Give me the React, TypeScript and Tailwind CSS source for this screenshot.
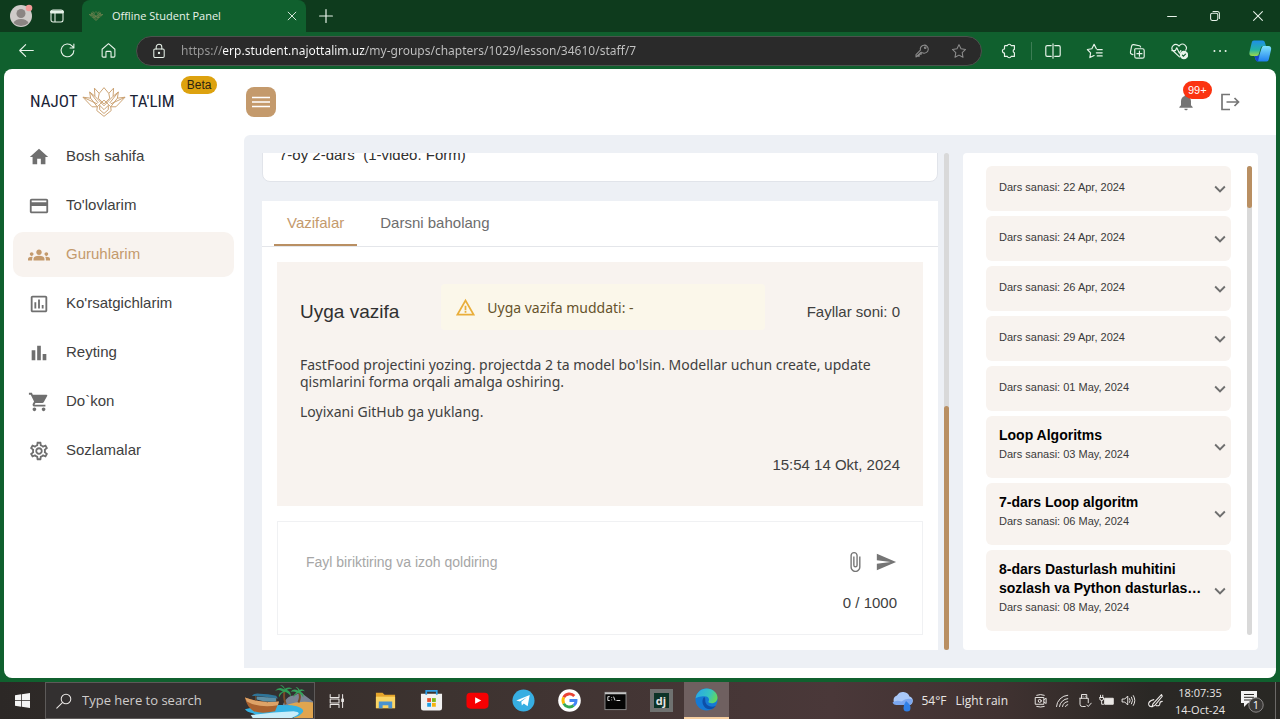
import type { ReactNode } from "react";
import { useState } from "react";
import {
  MdAttachFile,
  MdBarChart,
  MdCreditCard,
  MdExpandMore,
  MdGroups,
  MdHome,
  MdNotifications,
  MdOutlineAssessment,
  MdOutlineSettings,
  MdSend,
  MdShoppingCart,
  MdWarningAmber,
} from "react-icons/md";

type IconProps = { children: ReactNode; className?: string; viewBox?: string };

function Line({ children, className = "size-4", viewBox = "0 0 20 20" }: IconProps) {
  return (
    <svg
      aria-hidden="true"
      viewBox={viewBox}
      className={`shrink-0 ${className}`}
      fill="none"
      stroke="currentColor"
      strokeWidth="1.3"
      strokeLinecap="round"
      strokeLinejoin="round"
    >
      {children}
    </svg>
  );
}

function Lotus({ className }: { className: string }) {
  return (
    <svg
      aria-hidden="true"
      viewBox="0 0 46 32"
      className={`shrink-0 ${className}`}
      fill="none"
      stroke="#c9a06f"
      strokeWidth="1"
      strokeLinejoin="round"
    >
      <path d="M23 1 L18 7 L13 1.500 L13.500 10 L8 5.500 L9 12 L1 11 L10.500 21 H16 L15.500 25 L23 31 L30.500 25 L30 21 H35.500 L45 11 L37 12 L38 5.500 L32.500 10 L33 1.500 L28 7 Z" />
      <path d="M18 7 L17 12 L23 18 L29 12 L28 7 M13.500 10 L23 20 L32.500 10" />
      <path d="M9 12 L16 21 L23 14 L30 21 L37 12" />
      <path d="M1 11 L16 18 M45 11 L30 18 M8 5.500 L17 17 M38 5.500 L29 17" />
      <path d="M18.500 19.500 V24 L23 28 L27.500 24 V19.500 L23 24 Z" />
    </svg>
  );
}

const toolbarTools = [
  {
    label: "Extensions",
    spacing: "-mr-3 border-r border-[#3c7d54] pr-[13px]",
    icon: (
      <path d="M6 4h2.200a2.200 2.200 0 0 1 4.200 0H16v4.200a2 2 0 0 0 0 3.800v4h-3.600a2.200 2.200 0 0 1-4.200 0H5v-3.600a2.300 2.300 0 1 1 0-4.600V5a1 1 0 0 1 1-1z" />
    ),
  },
  {
    label: "Split screen",
    icon: <path d="M8 4H3.500a1.500 1.500 0 0 0-1.500 1.500v9A1.500 1.500 0 0 0 3.500 16H8M12 4h4.500A1.500 1.500 0 0 1 18 5.500v9a1.500 1.500 0 0 1-1.500 1.500H12M10 2v16" />,
  },
  {
    label: "Favorites",
    icon: <path d="M11.500 7.500 9 2.500 6.500 7.500 1.500 8.300l3.600 3.700-.8 5.300L9 15M12.500 8.500H18M11.500 12H18M12.500 15.500H18" />,
  },
  {
    label: "Collections",
    icon: <path d="M5.500 14 4 13.500a2 2 0 0 1-1.300-2.300L4 4.500A2 2 0 0 1 6.300 3l6.400 1.200A2 2 0 0 1 14 5.500M8 7.500h8a2 2 0 0 1 2 2V16a2 2 0 0 1-2 2H9.500a2 2 0 0 1-2-2V8M12.700 10.200v5.600M9.900 13h5.600" />,
  },
  {
    label: "Browser essentials",
    icon: (
      <>
        <path d="M10.500 16.500 3 9.500a4.300 4.300 0 0 1 6-6l1 1 1-1a4.300 4.300 0 0 1 6.500 5.500M2 9.500h4l1.500-3 3 6 1.500-3" />
        <circle cx="15.500" cy="14.500" r="4" fill="currentColor" />
        <path d="m13.800 14.600 1.200 1.200 2.200-2.400" stroke="#10602e" />
      </>
    ),
  },
];

function Browser() {
  return (
    <div className="bg-[#0e3b1d] font-['Open_Sans','Noto_Sans',sans-serif] text-[#e8f3ea]">
      <div className="flex h-8">
        <div className="flex w-[82px] items-center gap-4 pl-[9px]">
          <button aria-label="Profile" className="size-6">
            <svg aria-hidden="true" viewBox="0 0 24 24" className="size-6">
              <circle cx="12" cy="12" r="11" fill="#cfcbc9" />
              <circle cx="12" cy="9.500" r="4.500" fill="#8b8583" />
              <path d="M4.500 19a8 6 0 0 1 15 0 11 11 0 0 1-15 0z" fill="#8b8583" />
              <circle cx="20" cy="4" r="3.300" fill="#f19a98" />
            </svg>
          </button>
          <button aria-label="Tab actions">
            <Line className="size-4">
              <rect x="2.500" y="2.500" width="15" height="15" rx="2.500" />
              <path d="M3 5h14" strokeWidth="3.500" />
              <path d="M7.500 6v11" />
            </Line>
          </button>
        </div>
        <div className="flex w-[224px] items-center rounded-t-lg bg-[#10602e] pr-[7px] pl-[7px]">
          <Lotus className="h-3 w-[14px]" />
          <span className="ml-[9px] flex-1 truncate text-[11px]">Offline Student Panel</span>
          <button aria-label="Close tab">
            <Line className="size-[14px]">
              <path d="m4.500 4.500 11 11M15.500 4.500l-11 11" />
            </Line>
          </button>
        </div>
        <button aria-label="New tab" className="ml-3">
          <Line className="size-4">
            <path d="M10 2v16M2 10h16" strokeWidth="1.500" />
          </Line>
        </button>
        <div className="ml-auto flex items-center gap-[27px] pr-[14px]">
          <button aria-label="Minimize">
            <Line className="size-4">
              <path d="M4.500 10.500h11" />
            </Line>
          </button>
          <button aria-label="Restore">
            <Line className="size-4">
              <rect x="4.500" y="6.500" width="9" height="9" rx="2" />
              <path d="M7.500 4.500H13a2.500 2.500 0 0 1 2.500 2.500v6" />
            </Line>
          </button>
          <button aria-label="Close window">
            <Line className="size-4">
              <path d="m4.500 4.500 11 11M15.500 4.500l-11 11" />
            </Line>
          </button>
        </div>
      </div>
      <div className="flex h-[37px] items-center bg-[#10602e]">
        <div className="flex w-[136px] items-center gap-6 pl-[18px]">
          <button aria-label="Back">
            <Line className="size-[17px]">
              <path d="M18 10H2M9 3l-7 7 7 7" />
            </Line>
          </button>
          <button aria-label="Refresh">
            <Line className="size-[17px]">
              <path d="M17.500 10A7.500 7.500 0 1 1 15.500 4.800L17.500 7M17.500 2.500V7H13" />
            </Line>
          </button>
          <button aria-label="Home">
            <Line className="size-[17px]">
              <path d="M2.500 8.500 10 2l7.500 6.500v8a1.300 1.300 0 0 1-1.300 1.300H13V12a1 1 0 0 0-1-1H8a1 1 0 0 0-1 1v5.800H3.800a1.300 1.300 0 0 1-1.300-1.300z" />
            </Line>
          </button>
        </div>
        <div className="flex h-[30px] flex-1 items-center rounded-full border border-[#4b534d] bg-[#2a2a2a] px-[14px]">
          <Line className="size-4">
            <rect x="3.500" y="7.500" width="13" height="10.500" rx="1.500" />
            <path d="M6.500 7.500V5a3.500 3.500 0 0 1 7 0v2.500" />
            <circle cx="10" cy="12.500" r=".8" fill="currentColor" />
          </Line>
          <input
            aria-label="Address"
            defaultValue="https://erp.student.najottalim.uz/my-groups/chapters/1029/lesson/34610/staff/7"
            className="ml-[14px] min-w-0 flex-1 bg-linear-[90deg,#9b9b9b_42px,#ffffff_42px,#ffffff_184px,#c4c4c4_184px] bg-clip-text font-['Noto_Sans',sans-serif] text-[12px] text-transparent outline-none"
          />
          <div className="flex items-center gap-[21px] text-[#8d8d8d]">
            <button aria-label="Passwords">
              <Line className="size-4">
                <path d="M9 11.500 2.500 17.500v-3L8 9a5 5 0 1 1 3.500 3.500L9 12v2H6.500v2.500H3" />
                <circle cx="14" cy="6" r="1" />
              </Line>
            </button>
            <button aria-label="Add to favorites">
              <Line className="size-4">
                <path d="m10 2 2.500 5.300 5.700.8-4.200 4 1 5.800-5-2.800-5 2.800 1-5.800-4.200-4 5.700-.8z" />
              </Line>
            </button>
          </div>
        </div>
        <div className="flex items-center gap-6 pr-2 pl-[18px]">
          {toolbarTools.map((tool) => (
            <button key={tool.label} aria-label={tool.label} className={tool.spacing}>
              <Line className="size-[18px]">{tool.icon}</Line>
            </button>
          ))}
          <button aria-label="Menu">
            <Line className="size-4">
              <path d="M3 10h.1M10 10h.1M17 10h.1" strokeWidth="2.400" />
            </Line>
          </button>
          <button aria-label="Copilot" className="-ml-1">
            <svg aria-hidden="true" viewBox="0 0 24 24" className="size-6">
              <defs>
                <linearGradient id="copA" x1="0" y1="0" x2="0" y2="1">
                  <stop offset="0" stopColor="#1e8ee8" />
                  <stop offset=".6" stopColor="#23b3a4" />
                  <stop offset="1" stopColor="#9ed84b" />
                </linearGradient>
                <linearGradient id="copB" x1="0" y1="0" x2="0" y2="1">
                  <stop offset="0" stopColor="#7fe3fb" />
                  <stop offset="1" stopColor="#1f7ff0" />
                </linearGradient>
              </defs>
              <path d="M6 1.500h8.500c1.500 0 2 .8 2.400 2L18 7h-2.500c-1.700 0-2.400.8-2.800 2.200l-1.900 6c-.4 1.200-1 1.800-2.300 1.800H4.200C1.800 17 1 15.500 1.500 13L3.600 4C4 2.300 4.700 1.500 6 1.500z" fill="url(#copA)" />
              <path d="M18.500 22.500H10c-1.500 0-2-.8-2.400-2L6.500 17H9c1.700 0 2.400-.8 2.800-2.200l1.900-6c.4-1.200 1-1.800 2.300-1.800h4.300c2.400 0 3.200 1.500 2.700 4l-2.100 9c-.4 1.700-1.100 2.500-2.400 2.500z" fill="url(#copB)" />
              <path d="M6.500 17H9c1.700 0 2.400-.8 2.800-2.200L10 22.500c-1.500 0-2-.8-2.400-2z" fill="#1746c7" />
            </svg>
          </button>
        </div>
      </div>
    </div>
  );
}

const menu = [
  { label: "Bosh sahifa", Icon: MdHome },
  { label: "To'lovlarim", Icon: MdCreditCard },
  { label: "Guruhlarim", Icon: MdGroups, active: true },
  { label: "Ko'rsatgichlarim", Icon: MdOutlineAssessment },
  { label: "Reyting", Icon: MdBarChart },
  { label: "Do`kon", Icon: MdShoppingCart },
  { label: "Sozlamalar", Icon: MdOutlineSettings },
];

function Header() {
  return (
    <header className="flex h-[66px] shrink-0 items-center pr-9">
      <div className="flex w-[242px] items-center pl-[26px]">
        <a
          href="#home"
          className="flex items-center gap-1 font-['Liberation_Sans_Narrow','Roboto_Condensed',sans-serif] text-[17px] text-[#1b2437]"
        >
          <span>NAJOT</span>
          <Lotus className="h-8 w-11" />
          <span>TA'LIM</span>
        </a>
        <span className="mb-[34px] ml-[6px] rounded-full bg-[#dda20f] px-[6px] text-[12px] leading-[18px] text-[#2c2410]">
          Beta
        </span>
      </div>
      <button
        aria-label="Toggle menu"
        className="flex size-[30px] items-center justify-center rounded-lg bg-[#c49a6c] text-white"
      >
        <svg aria-hidden="true" viewBox="0 0 18 12" className="h-3 w-[18px]">
          <path d="M0 1.500h18M0 6h18M0 10.500h18" stroke="currentColor" strokeWidth="1.600" />
        </svg>
      </button>
      <div className="ml-auto flex items-center gap-6 text-[#757575]">
        <button aria-label="Notifications" className="relative">
          <MdNotifications className="size-5" />
          <span className="absolute -top-[11px] left-[7px] rounded-full bg-[#fb3310] px-[5px] text-[11px] leading-[18px] font-medium text-white">
            99+
          </span>
        </button>
        <button aria-label="Log out">
          <svg
            aria-hidden="true"
            viewBox="0 0 20 18"
            className="h-[18px] w-5"
            fill="none"
            stroke="currentColor"
            strokeWidth="1.700"
          >
            <path d="M10 1.500H2v15h8M6.500 9h12M14.500 5l4 4-4 4" />
          </svg>
        </button>
      </div>
    </header>
  );
}

function Sidebar() {
  return (
    <nav className="-mt-px flex w-60 shrink-0 flex-col gap-1 pr-[10px] pl-[9px]">
      {menu.map(({ label, Icon, active }) => (
        <a
          key={label}
          href="#menu"
          className={`flex h-[45px] items-center rounded-[10px] pl-[15px] ${
            active ? "bg-[#f8f3ef] text-[#c49a6c]" : "text-[#404040]"
          }`}
        >
          <Icon className={`size-[22px] ${active ? "text-[#c49a6c]" : "text-[#6f6f6f]"}`} />
          <span className="ml-4 text-[15px]">{label}</span>
        </a>
      ))}
    </nav>
  );
}

function Comment() {
  const [text, setText] = useState("");
  return (
    <form className="mt-[15px] border border-[#f0f1f3] pt-7 pr-[25px] pb-[19px] pl-7 text-[15px] leading-6">
      <div className="flex items-center">
        <textarea
          aria-label="Izoh"
          rows={1}
          maxLength={1000}
          value={text}
          onChange={(event) => setText(event.target.value)}
          placeholder="Fayl biriktiring va izoh qoldiring"
          className="block h-6 flex-1 resize-none text-[14px] leading-6 outline-none placeholder:text-[#a6a6a6]"
        />
        <button type="button" aria-label="Fayl biriktirish" className="text-[#757575]">
          <MdAttachFile className="size-[22px]" />
        </button>
        <button type="submit" aria-label="Yuborish" className="ml-[9px] text-[#757575]">
          <MdSend className="size-[22px]" />
        </button>
      </div>
      <p className="mt-[17px] text-right text-[#404040]">{text.length} / 1000</p>
    </form>
  );
}

function Lesson() {
  return (
    <div className="flex min-w-0 flex-1 gap-[6px]">
      <section className="flex min-w-0 flex-1 flex-col justify-end overflow-hidden">
        <h1 className="shrink-0 rounded-lg border border-[#e1e4ea] bg-white px-4 text-[15px] leading-[52px] whitespace-pre text-[#303030]">
          {"7-oy 2-dars  (1-video. Form)"}
        </h1>
        <div className="mt-[19px] shrink-0 bg-white">
          <div role="tablist" className="flex gap-[10px] border-b border-[#e4e6ea] pl-3 text-[15px] leading-[43px]">
            <button role="tab" aria-selected="true" className="border-b-2 border-[#b98f62] px-[13px] text-[#c49a6c]">
              Vazifalar
            </button>
            <button role="tab" aria-selected="false" className="border-b-2 border-transparent px-[13px] text-[#6d6d6d]">
              Darsni baholang
            </button>
          </div>
          <div className="p-[15px]">
            <article className="bg-[#f8f3ef] px-[23px] pt-[22px] pb-[29px] text-[#404040]">
              <div className="flex items-end">
                <h2 className="text-[19px] leading-9 text-[#303030]">Uyga vazifa</h2>
                <div className="mx-[42px] flex h-[46px] flex-1 items-center rounded bg-[#fbf7ea] pl-[14px] font-['Noto_Sans',sans-serif] text-[14px] text-[#66532b]">
                  <MdWarningAmber className="size-[21px] text-[#e9ae3a]" />
                  <span className="ml-[11px]">Uyga vazifa muddati: -</span>
                </div>
                <span className="text-[15px] leading-9">Fayllar soni: 0</span>
              </div>
              <div className="mt-[26px] flex flex-col gap-[13px] font-['Noto_Sans',sans-serif] text-[14px] leading-[17px]">
                <p>
                  FastFood projectini yozing. projectda 2 ta model bo'lsin. Modellar uchun create, update qismlarini
                  forma orqali amalga oshiring.
                </p>
                <p>Loyixani GitHub ga yuklang.</p>
              </div>
              <p className="mt-[33px] text-right text-[15px] leading-6">15:54 14 Okt, 2024</p>
            </article>
            <Comment />
          </div>
        </div>
      </section>
      <div className="flex w-[5px] flex-col justify-end rounded-full bg-[#d9d9d9]">
        <div className="h-[49%] rounded-full bg-[#b98f62]" />
      </div>
    </div>
  );
}

const lessons = [
  { date: "22 Apr, 2024" },
  { date: "24 Apr, 2024" },
  { date: "26 Apr, 2024" },
  { date: "29 Apr, 2024" },
  { date: "01 May, 2024" },
  { title: "Loop Algoritms", date: "03 May, 2024" },
  { title: "7-dars Loop algoritm", date: "06 May, 2024" },
  { title: "8-dars Dasturlash muhitini sozlash va Python dasturlas…", date: "08 May, 2024" },
];

function Schedule() {
  return (
    <aside className="flex w-[295px] shrink-0 gap-4 overflow-hidden rounded bg-white pt-[13px] pr-[6px] pb-[15px] pl-[23px]">
      <ul className="flex flex-1 flex-col gap-[5px]">
        {lessons.map(({ title, date }) => (
          <li key={date}>
            <button className="flex w-full items-center rounded-md bg-[#f8f3ef] pl-[13px] text-left">
              <span className={`flex-1 pb-[15px] ${title ? "pt-[10px]" : "pt-3"}`}>
                {title && <span className="block text-[14px] leading-[19px] font-bold text-black">{title}</span>}
                <span className="block text-[11px] leading-[18px] text-[#3a3a3a]">Dars sanasi: {date}</span>
              </span>
              <MdExpandMore className="size-[22px] shrink-0 text-[#6f6f6f]" />
            </button>
          </li>
        ))}
      </ul>
      <div className="w-[5px] rounded-full bg-[#d9d9d9]">
        <div className="h-[9%] rounded-full bg-[#b98f62]" />
      </div>
    </aside>
  );
}

const apps = [
  {
    label: "File Explorer",
    icon: (
      <>
        <path d="M2 4h7l2 2h11v14H2z" fill="#e5a52b" />
        <path d="M2 8h20v12H2z" fill="#fbd564" />
        <path d="M5 20v-7h14v7h-4v-3H9v3z" fill="#4a93d1" />
      </>
    ),
  },
  {
    label: "Microsoft Store",
    icon: (
      <>
        <path d="M1 5h22v15a2.500 2.500 0 0 1-2.500 2.500h-17A2.500 2.500 0 0 1 1 20z" fill="#f1f1f1" />
        <path d="M6.500 6V2h11v4" fill="none" stroke="#2f9fe6" strokeWidth="1.800" />
        <path d="M7.500 9.500h4v4h-4z" fill="#e8502c" />
        <path d="M12.500 9.500h4v4h-4z" fill="#7bb71b" />
        <path d="M7.500 14.500h4v4h-4z" fill="#1e9fe4" />
        <path d="M12.500 14.500h4v4h-4z" fill="#f5b40e" />
      </>
    ),
  },
  {
    label: "YouTube",
    icon: (
      <>
        <rect x=".5" y="4" width="23" height="16.500" rx="4" fill="#f60002" />
        <path d="M9.500 8.500v7l6.500-3.500z" fill="#fff" />
      </>
    ),
  },
  {
    label: "Telegram",
    icon: (
      <>
        <circle cx="12" cy="12" r="11.500" fill="#37aee2" />
        <path d="M4.500 12 18.500 6.300 16.300 18l-4-2.900-2 2-.6-3.700 6-5-7.500 4.600z" fill="#fff" />
      </>
    ),
  },
  {
    label: "Google",
    icon: (
      <>
        <circle cx="12" cy="12" r="11.800" fill="#fff" />
        <g fill="none" strokeWidth="3">
          <path d="M17 7.300A6.800 6.800 0 0 0 6 8.800" stroke="#ea4335" />
          <path d="M6 8.800a6.800 6.800 0 0 0 0 6.400" stroke="#fbbc05" />
          <path d="M6 15.200a6.800 6.800 0 0 0 10.300 2" stroke="#34a853" />
          <path d="M12 12h6.800a6.500 6.500 0 0 1-2.500 5.200" stroke="#4285f4" />
        </g>
      </>
    ),
  },
  {
    label: "Command Prompt",
    icon: (
      <>
        <rect x="1" y="3.500" width="22" height="18" fill="#050505" stroke="#8b8b8b" />
        <path d="M1 3.500h22v2H1z" fill="#c5c5c5" />
        <path d="M6 8H4v4h2M8 8.500v.8M8 11v.8M10 8l1.500 4M13 12h4" stroke="#e6e6e6" strokeWidth="1" fill="none" />
      </>
    ),
  },
];

function TaskIcon({ children }: { children: ReactNode }) {
  return (
    <svg aria-hidden="true" viewBox="0 0 24 24" className="size-[23px]">
      {children}
    </svg>
  );
}

function Beach() {
  return (
    <svg aria-hidden="true" viewBox="0 0 72 36" className="h-full w-[72px] shrink-0">
      <path d="M42 20q5-8 11-7 6-5 11 0l8 6v6H40z" fill="#7b8595" />
      <path d="M46 22q12-4 26-2v16H52q6-8-6-14z" fill="#e0a54f" />
      <path d="M2 27q24-6 48-4 12 2 12 6-2 5-12 7H10q6-3 0-5-6-1-8-4z" fill="#35b2e2" />
      <path d="M8 33q22-3 44-4 8 1 4 4l-6 3H10z" fill="#c9eefa" />
      <path d="M2 15q16 6 35 4l-4 10q-14 3-22 0-7-4-9-14z" fill="#a9622f" />
      <path d="M2 15q16 6 35 4l-1 4q-20 3-32-4z" fill="#dea367" />
      <path d="M13 18v-6M25 20v-7M34 19v-5" stroke="#6f4a2a" />
      <path d="M14 14q10 1 20 1v4q-11 1-20-2z" fill="#5d8fa6" />
      <path d="M9 13q4-3 8-2 9 0 17 2l2 3q-13-2-27-3z" fill="#2f7599" />
      <path d="M44 22q-3-8-1-15M57 20q3-6 0-12" stroke="#7a4d27" strokeWidth="2" fill="none" />
      <path d="M43 7q-6-4-10 1 5-2 8 1-5 1-4 6 2-5 6-6 4 1 6 5 1-5-4-7 5-2 6 0-2-4-8-1-1-4-5-4 4 2 5 5z" fill="#2f9e57" />
      <path d="M57 8q-5-3-8 1 4-1 6 1-3 1-3 5 2-4 5-5 3 1 5 5 1-5-3-6 3-2 5 0-2-4-6-2-1-3-4-3 3 2 3 4z" fill="#35a35c" />
    </svg>
  );
}

const tray = [
  {
    label: "Meet now",
    icon: <path d="M5 3q5-2 10 0M5 18q5 1.500 10 0M3.500 6h11v9h-11zM14.500 9l3-2v7l-3-2M11 10.500a2 2 0 1 1-4 0 2 2 0 0 1 4 0z" />,
  },
  {
    label: "Network",
    icon: <path d="M2 18A16 16 0 0 1 17 3M6 18A12 12 0 0 1 17 7.500M10 18a8 8 0 0 1 7-6.500M14 18q.500-2 3-2.500" />,
  },
  { label: "USB device", icon: <path d="M6 7V2h7v5M4 7h11v6M4 7v8q0 3 3 3h4M8 4.300h.1M11 4.300h.1M13 16l2 2 4-4.500" /> },
  {
    label: "Battery",
    icon: (
      <>
        <path d="M8 7h11v8H8z" fill="currentColor" />
        <path d="M2 3v3M5 3v3M1 6h5v2q0 2-2.500 2T1 8zM3.500 10v5H6" />
      </>
    ),
  },
  { label: "Volume", icon: <path d="M2 8h3l4-4v12l-4-4H2zM11.500 7.500q1.500 2.500 0 5M14 5.500q3 4.500 0 9M16.500 3.500q4 6.500 0 13" /> },
];

function Taskbar() {
  return (
    <footer className="mt-1 flex h-[37px] shrink-0 items-stretch bg-linear-[90deg,#2c2826,#3d3330_35%,#4a3839_65%,#403231_78%,#2a2825_90%,#292824] font-['Open_Sans','Noto_Sans',sans-serif] text-[#e9e6e4]">
      <button aria-label="Start" className="flex w-[45px] items-center justify-center">
        <svg aria-hidden="true" viewBox="0 0 16 16" className="size-[15px]" fill="#f5f5f5">
          <path d="M0 2.300 6.500 1.400v6.200H0zM7.300 1.300 16 0v7.600H7.300zM0 8.400h6.500v6.200L0 13.700zM7.300 8.400H16V16l-8.700-1.300z" />
        </svg>
      </button>
      <label className="flex w-[270px] items-center border border-[#5d5a59] bg-[#333030] pl-[10px]">
        <Line className="size-4">
          <circle cx="12.500" cy="7.500" r="6" />
          <path d="M8 12 1 19" />
        </Line>
        <input
          aria-label="Search"
          placeholder="Type here to search"
          className="ml-[10px] min-w-0 flex-1 text-[13px] outline-none placeholder:text-[#cfcccb]"
        />
        <Beach />
      </label>
      <button aria-label="Task view" className="mr-[3px] flex w-11 items-center justify-center">
        <Line className="size-4">
          <path d="M1.500 2v3.500h11V2M1.500 18v-3.500h11V18M1.500 7.500h11v5h-11zM17 2v16" />
          <path d="M16 7.500h2v3h-2z" fill="currentColor" />
        </Line>
      </button>
      {apps.map((app) => (
        <button key={app.label} aria-label={app.label} className="flex w-[46px] items-center justify-center">
          <TaskIcon>{app.icon}</TaskIcon>
        </button>
      ))}
      <button aria-label="Django" className="flex w-[46px] items-center justify-center">
        <span className="flex size-[23px] items-center justify-center bg-[#6f7170]">
          <span className="flex size-[15px] items-center justify-center bg-[#0c3327] text-[11px] leading-[15px] font-bold">
            dj
          </span>
        </span>
      </button>
      <button
        aria-label="Microsoft Edge"
        className="flex w-[45px] items-center justify-center border-b-2 border-[#f6cfa0] bg-[#6f6060]"
      >
        <svg aria-hidden="true" viewBox="0 0 24 24" className="size-[23px]">
          <defs>
            <linearGradient id="edgeTop" x1="0" y1=".3" x2="1" y2=".6">
              <stop offset="0" stopColor="#2aa7e6" />
              <stop offset=".6" stopColor="#35c4c0" />
              <stop offset="1" stopColor="#66d956" />
            </linearGradient>
          </defs>
          <circle cx="12" cy="12" r="11.500" fill="#1579d4" />
          <path d="M.6 11C1.500 4.500 6.500.5 12 .5c7 0 11.500 5 11.500 9.500 0 3.500-2.500 6-6 6-2.500 0-4-1-3.500-1.800 1.500-2 .5-5.700-4-5.700C5 8.500 1 10 .6 11z" fill="url(#edgeTop)" />
          <path d="M9.500 9.500c-3 3-2 9.500 2.500 12 3.500 1.500 7.500.5 9.800-3-5 2.500-10.500-.3-11-4.500-.2-2 .3-3.500-1.300-4.500z" fill="#0d4fa8" />
        </svg>
      </button>
      <div className="ml-auto flex items-center text-[12px]">
        <svg aria-hidden="true" viewBox="0 0 24 22" className="mr-[6px] h-[22px] w-6">
          <path d="M6 15a5 5 0 0 1 0-9.500 7 7 0 0 1 12.500 1A4.500 4.500 0 0 1 19 15z" fill="#a9c8f8" />
          <path d="M1.500 12.500q4-3 9-1 5-4 11-2-.5 5.500-3 5.500H6q-3.500 0-4.500-2.500z" fill="#7ba7f0" />
          <path d="M15 11q5 4 4.500 7a3.500 3.500 0 0 1-7 0q0-3 2.500-7z" fill="#2f7fe6" />
        </svg>
        <span>54°F</span>
        <span className="ml-[9px]">Light rain</span>
        <div className="ml-[25px] flex items-center gap-[7px]">
          {tray.map((item) => (
            <button key={item.label} aria-label={item.label}>
              <Line className="size-[15px]">{item.icon}</Line>
            </button>
          ))}
          <button aria-label="Pen" className="ml-1">
            <Line className="size-[17px]">
              <path d="M17 3 7 14l-1 3 3-1L18 5zM8 9q-7 2-6 6 1 3 5 2M11 16q4 1 4-2t3-3" />
            </Line>
          </button>
        </div>
        <time className="ml-[10px] w-[52px] text-center text-[11px] leading-[17px] whitespace-nowrap">
          18:07:35
          <br />
          14-Oct-24
        </time>
        <button aria-label="Notification center" className="mr-[11px] ml-[14px]">
          <svg aria-hidden="true" viewBox="0 0 24 24" className="size-6">
            <path d="M1 2h16v12H8l-4 4v-4H1z" fill="#f3f3f3" />
            <path d="M4 5.500h10M4 8.300h10M4 11h7" stroke="#2b2926" />
            <circle cx="16" cy="16" r="7.200" fill="#3a3836" stroke="#8b8988" />
            <text x="16" y="20" textAnchor="middle" fontSize="11" fill="#fff">
              1
            </text>
          </svg>
        </button>
        <span className="mr-1 h-[37px] w-px bg-[#6b6967]" />
      </div>
    </footer>
  );
}

export default function App() {
  return (
    <div className="flex h-screen flex-col overflow-hidden bg-[#10602e] font-['Liberation_Sans',Arial,sans-serif]">
      <Browser />
      <div className="mx-1 flex min-h-0 flex-1 flex-col rounded-lg bg-white pb-[10px]">
        <Header />
        <div className="flex min-h-0 flex-1">
          <Sidebar />
          <main className="flex min-w-0 flex-1 gap-[14px] rounded-tl-md bg-[#edf0f5] p-[18px]">
            <Lesson />
            <Schedule />
          </main>
        </div>
      </div>
      <Taskbar />
    </div>
  );
}
